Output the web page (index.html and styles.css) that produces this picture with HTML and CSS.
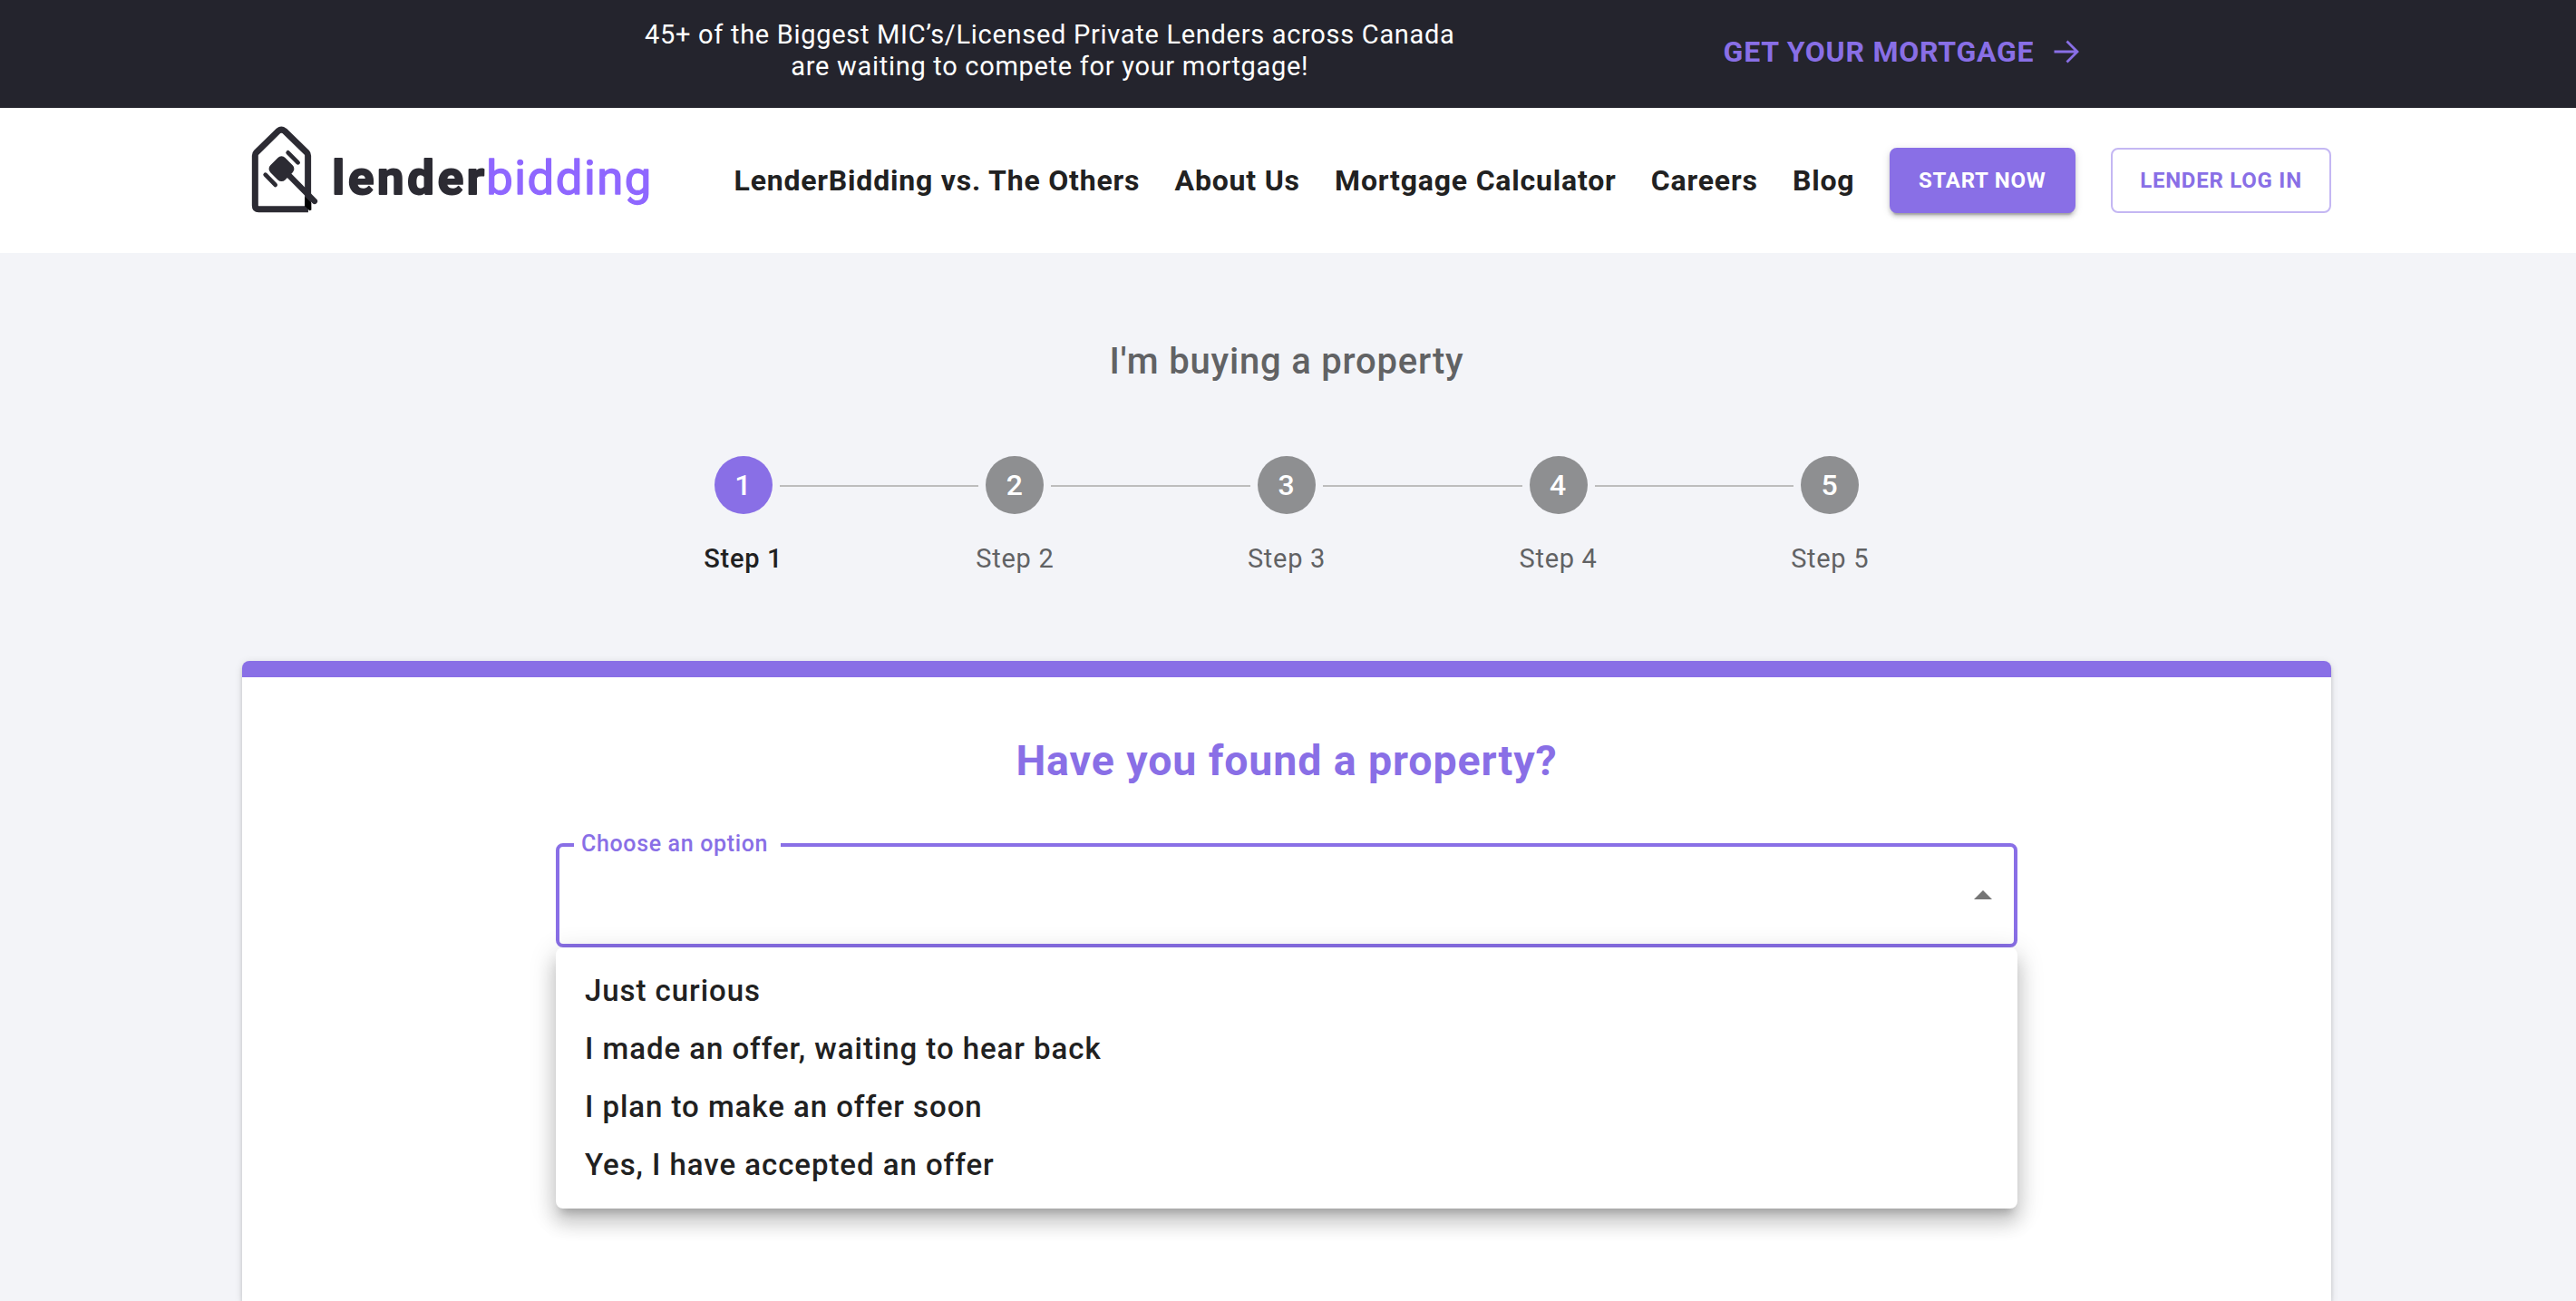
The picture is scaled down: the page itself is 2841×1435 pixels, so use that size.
FILE: index.html
```html
<!DOCTYPE html>
<html lang="en">
<head>
    <meta charset="UTF-8">
    <meta name="viewport" content="width=device-width, initial-scale=1.0">
    <link rel="stylesheet" href="styles.css">
    <title>LenderBidding</title>
</head>
<body>
    <div class="banner">
        <p class="banner-text">45+ of the Biggest MIC’s/Licensed Private Lenders across Canada<br>are waiting to compete for your mortgage!</p>
        <a class="banner-link" href="#">GET YOUR MORTGAGE
            <svg class="arrow" viewBox="0 0 28 26" fill="none" stroke="currentColor" stroke-width="2.8">
                <path d="M0.5 13H26M14.5 1.5L26 13L14.5 24.5"/>
            </svg>
        </a>
    </div>

    <header class="header">
        <div class="header-inner">
            <svg class="logo" viewBox="51 50 1330 300">
                <!-- house -->
                <path d="M240 331H76Q64 331 64 319V154Q64 148 68 144L141 72Q151 64 161 72L235 144Q239 148 239 154V331" fill="none" stroke="#2c2b33" stroke-width="21" stroke-linejoin="round"/>
                <path d="M229 290L250 310V334L244 336L229 321Z" fill="#000"/>
                <!-- gavel -->
                <rect x="117" y="163" width="69" height="69" rx="17" transform="rotate(45 151.5 197.5)" fill="#2c2b33"/>
                <path d="M175 218L261 305" stroke="#2c2b33" stroke-width="19" stroke-linecap="round"/>
                <path d="M173 144L206 177M98 217L131 251" stroke="#2c2b33" stroke-width="14" stroke-linecap="round"/>
                <text class="logo-dark" x="319" y="282" textLength="504">lender</text>
                <text class="logo-light" x="829" y="282" textLength="547">bidding</text>
            </svg>
            <nav class="nav">
                <a href="#">LenderBidding vs. The Others</a>
                <a href="#">About Us</a>
                <a href="#">Mortgage Calculator</a>
                <a href="#">Careers</a>
                <a href="#">Blog</a>
                <button class="btn btn-filled" type="button">START NOW</button>
                <button class="btn btn-outlined" type="button">LENDER LOG IN</button>
            </nav>
        </div>
    </header>

    <main class="main">
        <h2 class="title">I'm buying a property</h2>

        <ol class="stepper">
            <li class="step active"><div class="step-row"><span class="circle">1</span></div>Step 1</li>
            <li class="step"><div class="step-row"><span class="circle">2</span></div>Step 2</li>
            <li class="step"><div class="step-row"><span class="circle">3</span></div>Step 3</li>
            <li class="step"><div class="step-row"><span class="circle">4</span></div>Step 4</li>
            <li class="step"><div class="step-row"><span class="circle">5</span></div>Step 5</li>
        </ol>

        <section class="card">
            <h1 class="question">Have you found a property?</h1>
            <div class="select">
                <span class="select-label">Choose an option</span>
                <svg class="caret" viewBox="0 0 20 10"><path d="M0 10L10 0L20 10Z"/></svg>
            </div>
            <ul class="menu">
                <li>Just curious</li>
                <li>I made an offer, waiting to hear back</li>
                <li>I plan to make an offer soon</li>
                <li>Yes, I have accepted an offer</li>
            </ul>
        </section>
    </main>
</body>
</html>
```
FILE: styles.css
```css
* {
    box-sizing: border-box;
}

body {
    display: flex;
    flex-direction: column;
    margin: 0;
    height: 100vh;
    background-color: #f3f4f8;
    color: #212121;
    font-family: Roboto, "Liberation Sans", sans-serif;
}

a {
    color: inherit;
    text-decoration: none;
}

/* Top banner */
.banner {
    display: flex;
    align-items: center;
    height: 119px;
    padding: 0 0 5px 711px;
    background-color: #24242d;
    color: #fff;
}

.banner-text {
    margin: 0 296px 2px 0;
    font-size: 29px;
    line-height: 35px;
    letter-spacing: 0.7px;
    text-align: center;
}

.banner-link {
    display: flex;
    align-items: center;
    gap: 22px;
    color: #896fe6;
    font-size: 32px;
    font-weight: 700;
    letter-spacing: 0.75px;
}

.arrow {
    width: 28px;
    height: 26px;
}

/* Header */
.header {
    height: 160px;
    background-color: #fff;
}

.header-inner {
    display: flex;
    align-items: center;
    justify-content: space-between;
    width: 2304px;
    height: 160px;
    margin-left: 267px;
    padding-left: 10px;
}

.logo {
    width: 443px;
    height: 100px;
    margin-bottom: 24px;
}

.logo-dark,
.logo-light {
    font-size: 158px;
    stroke-width: 4;
    stroke-linejoin: round;
}

.logo-dark {
    font-weight: 700;
    fill: #2c2b33;
    stroke: #2c2b33;
    stroke-width: 6;
}

.logo-light {
    fill: #8f67ff;
    stroke: #8f67ff;
}

.nav {
    display: flex;
    align-items: center;
    gap: 38.3px;
    font-size: 32px;
    font-weight: 700;
    letter-spacing: 0.8px;
}

.btn {
    height: 72px;
    padding: 0;
    border: none;
    border-radius: 8px;
    font-family: inherit;
    font-size: 24px;
    font-weight: 700;
    letter-spacing: 0.75px;
}

.btn-filled {
    width: 205px;
    background-color: #896fe6;
    color: #fff;
    box-shadow: 0 6px 2px -4px rgba(0, 0, 0, 0.2), 0 4px 4px rgba(0, 0, 0, 0.14), 0 2px 10px rgba(0, 0, 0, 0.12);
}

.btn-outlined {
    width: 243px;
    margin-left: 1px;
    border: 2px solid #c4b7f3;
    background-color: #fff;
    color: #896fe6;
}

/* Page content */
.main {
    display: flex;
    flex: 1;
    flex-direction: column;
    width: 2304px;
    min-height: 0;
    margin-left: 267px;
}

.title {
    margin: 0;
    padding-top: 96px;
    color: #616264;
    font-size: 40px;
    font-weight: 500;
    line-height: 48px;
    letter-spacing: 0.8px;
    text-align: center;
}

.stepper {
    display: flex;
    width: 1498px;
    margin: 80px auto 0;
    padding: 0;
    list-style: none;
}

.step {
    flex: 1;
    color: #616264;
    font-size: 29px;
    line-height: 34px;
    letter-spacing: 0.7px;
    text-align: center;
}

.step.active {
    color: #212121;
    font-weight: 500;
}

.step-row {
    display: flex;
    align-items: center;
    gap: 8px;
    margin-bottom: 32px;
}

/* each step draws half of the line on both of its sides */
.step-row::before,
.step-row::after {
    content: "";
    flex: 1;
    height: 2px;
    margin-top: 2px;
    background-color: #bdbdbd;
}

.step:first-child .step-row::before,
.step:last-child .step-row::after {
    visibility: hidden;
}

.circle {
    width: 64px;
    height: 64px;
    padding-right: 1px;
    border-radius: 50%;
    background-color: #8e8f91;
    color: #fff;
    font-size: 32px;
    font-weight: 500;
    line-height: 64px;
    letter-spacing: 0;
}

.active .circle {
    background-color: #896fe6;
}

/* Question card */
.card {
    flex: 1;
    min-height: 0;
    margin-top: 96px;
    padding: 64px 346px 0;
    border-top: 18px solid #896fe6;
    border-radius: 8px 8px 0 0;
    background-color: #fff;
    box-shadow: 0 6px 2px -4px rgba(0, 0, 0, 0.2), 0 4px 4px rgba(0, 0, 0, 0.14), 0 2px 10px rgba(0, 0, 0, 0.12);
}

.question {
    margin: 0 0 63px;
    color: #896fe6;
    font-size: 46.5px;
    font-weight: 700;
    line-height: 56px;
    letter-spacing: 0.9px;
    text-align: center;
}

.select {
    position: relative;
    display: flex;
    align-items: center;
    justify-content: flex-end;
    height: 115px;
    padding-right: 24px;
    border: 4px solid #896fe6;
    border-radius: 8px;
}

.select-label {
    position: absolute;
    top: -18px;
    left: 16px;
    width: 228px;
    padding-left: 8px;
    background-color: #fff;
    color: #896fe6;
    font-size: 25px;
    font-weight: 500;
    line-height: 30px;
    letter-spacing: 0.65px;
}

.caret {
    width: 20px;
    height: 10px;
    margin-bottom: 1px;
    fill: #757575;
}

.menu {
    position: relative;
    margin: 0;
    padding: 16px 0;
    border-radius: 8px;
    background-color: #fff;
    box-shadow: 0 10px 10px -6px rgba(0, 0, 0, 0.2), 0 16px 20px 2px rgba(0, 0, 0, 0.14), 0 6px 28px 4px rgba(0, 0, 0, 0.12);
    list-style: none;
}

.menu li {
    padding: 0 32px;
    font-size: 33px;
    font-weight: 500;
    line-height: 64px;
    letter-spacing: 0.95px;
}
```
